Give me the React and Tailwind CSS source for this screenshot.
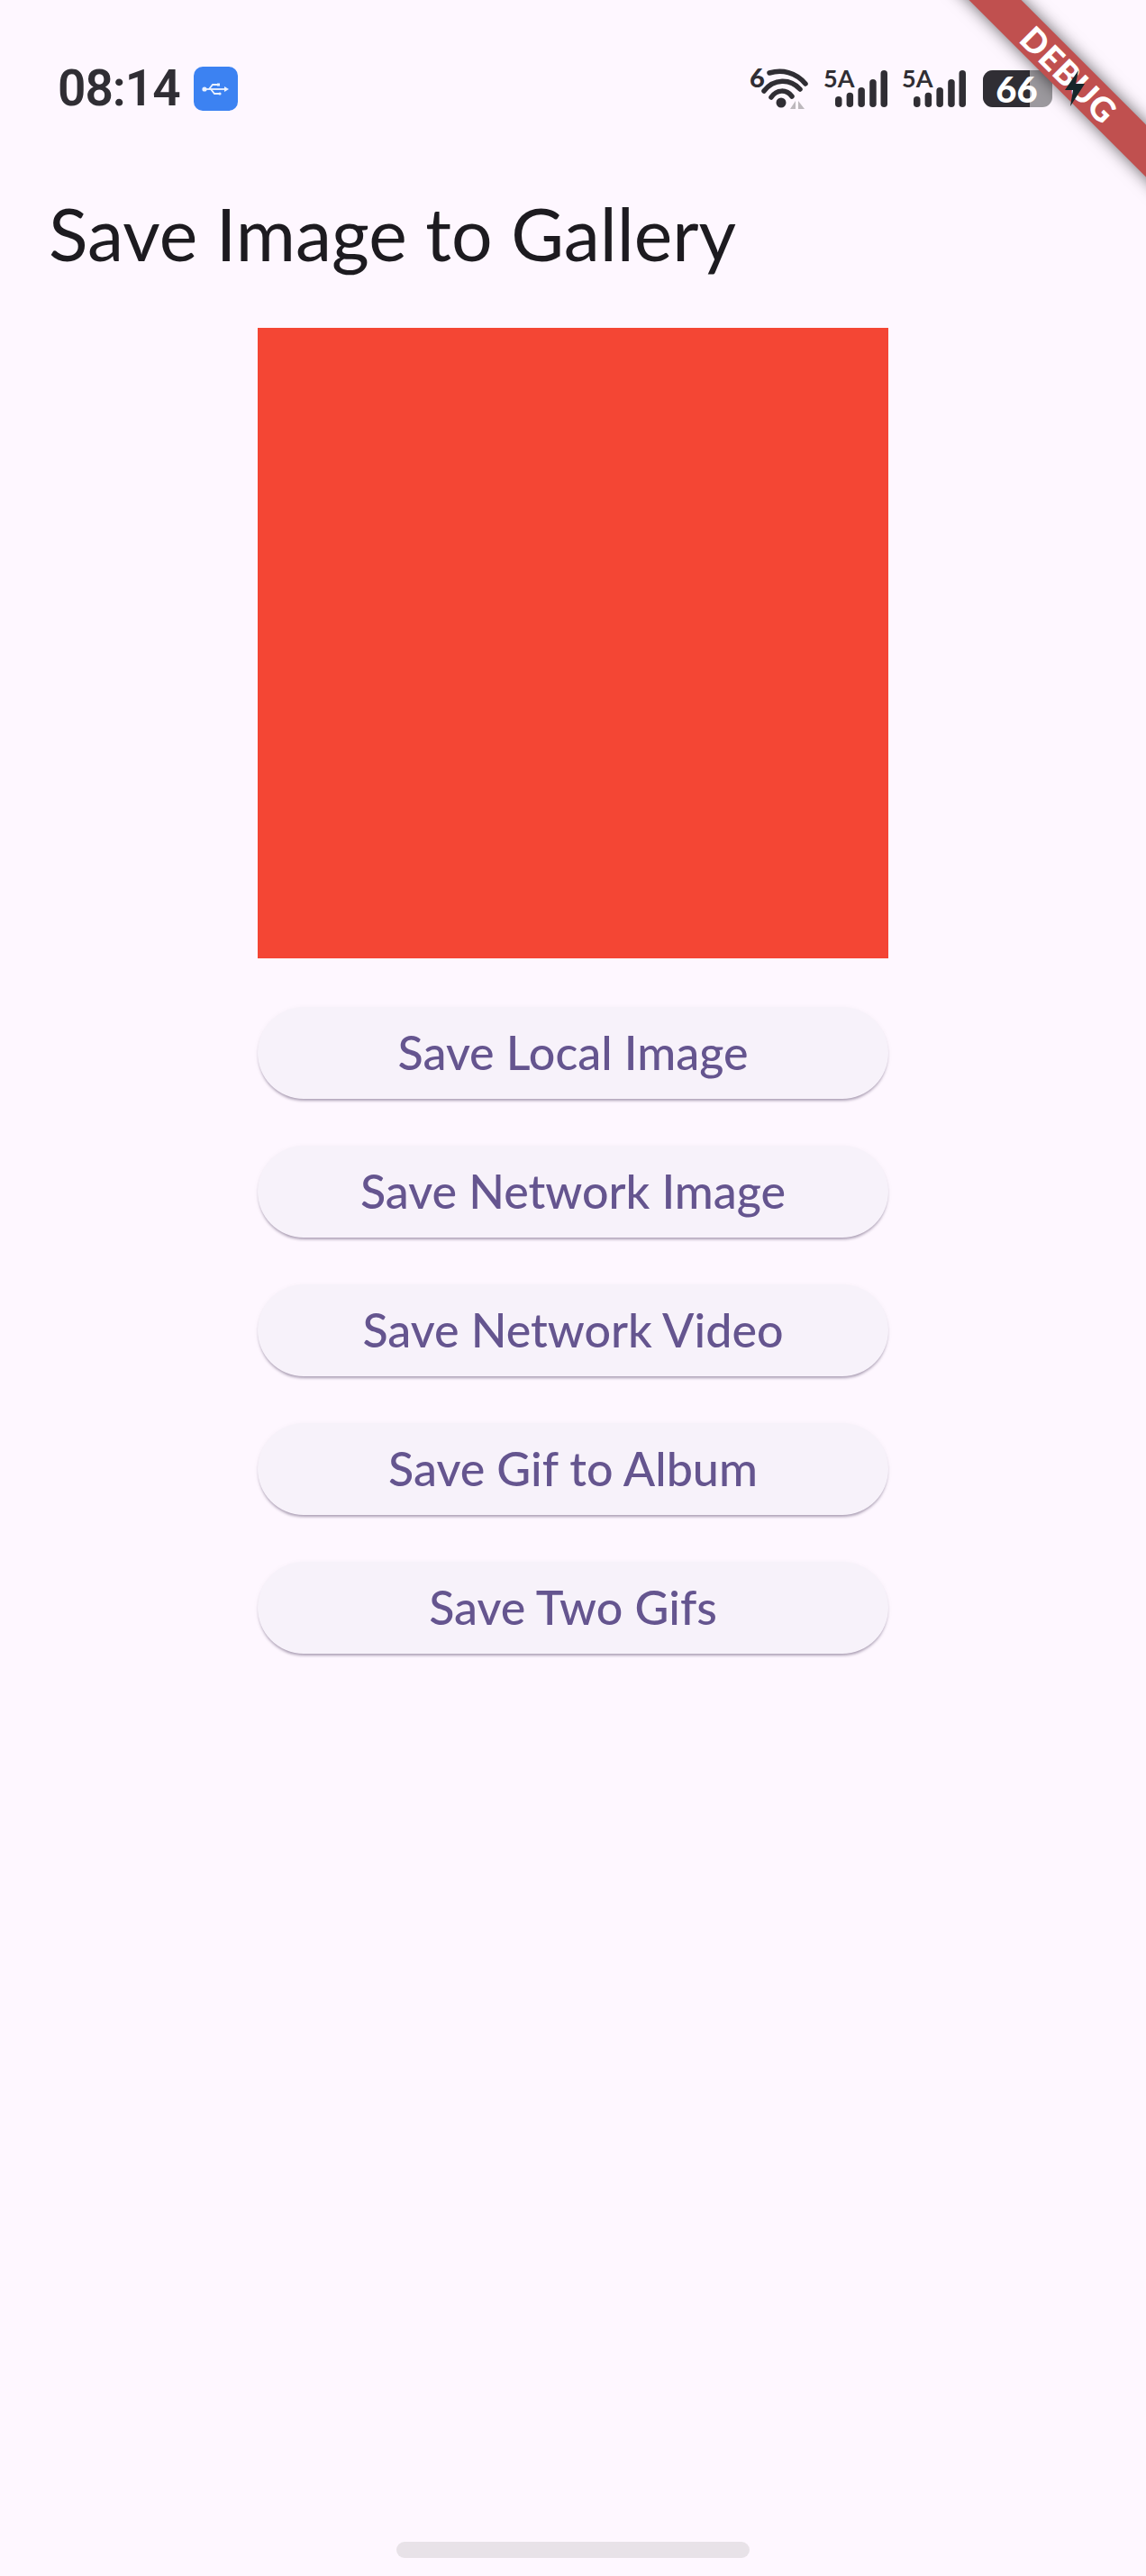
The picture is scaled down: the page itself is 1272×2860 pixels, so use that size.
import React from 'react';

const buttons = ['Save Local Image', 'Save Network Image', 'Save Network Video', 'Save Gif to Album', 'Save Two Gifs'];

// Cellular signal: network label plus five rising bars
const SignalIcon = () => (
    <svg className="overflow-visible" width="70" height="41" viewBox="0 0 70 41" fill="#302e34">
        <text x="-1" y="19" fontSize="27" fontWeight="700" fontFamily="Lato, sans-serif">5A</text>
        <rect x="12" y="29" width="7.5" height="12" rx="3.75" />
        <rect x="24.6" y="24.7" width="7.5" height="16.3" rx="3.75" />
        <rect x="37.4" y="19" width="7.5" height="22" rx="3.75" />
        <rect x="50.2" y="10" width="7.5" height="31" rx="3.75" />
        <rect x="62.5" y="0" width="7.5" height="41" rx="3.75" />
    </svg>
);

const WifiIcon = () => (
    <svg className="overflow-visible" width="65" height="46" viewBox="0 0 65 46" fill="none">
        <text x="-1" y="21" fontSize="29" fontWeight="900" fontFamily="Lato, sans-serif" fill="#302e34">6</text>
        <g stroke="#302e34" strokeWidth="5.5" strokeLinecap="round">
            <path d="M21 5C35 1 50 4 61 17" />
            <path d="M15 25C26 11 44 11 55 23" />
            <path d="M23 32C29 23 40 23 46 31" />
        </g>
        <circle cx="34" cy="38" r="5.5" fill="#302e34" />
        <path d="M50 36V45H44ZM53 36V45H60Z" fill="#bdb8bd" />
    </svg>
);

const UsbBadge = () => (
    <div className="w-[49px] h-[49px] rounded-[10px] bg-[#3c82f2] flex items-center justify-center">
        <svg width="30" height="16" viewBox="0 0 30 16" fill="none" stroke="#eaf2ff" strokeWidth="1.8">
            <circle cx="3" cy="8" r="2.6" fill="#eaf2ff" stroke="none" />
            <path d="M3 8H26" />
            <path d="M8 8L12 3H17" />
            <path d="M10 8L14 13H19" />
            <path d="M25 5L30 8L25 11Z" fill="#eaf2ff" stroke="none" />
            <rect x="17" y="1.5" width="3" height="3" fill="#eaf2ff" stroke="none" />
            <circle cx="20" cy="13" r="1.6" fill="#eaf2ff" stroke="none" />
        </svg>
    </div>
);

const Battery = () => (
    <div className="relative w-[77px] h-[41px] rounded-[11px] bg-[#9c999e] overflow-hidden">
        <div className="w-[52px] h-full bg-[#302e34]" />
        <span className="absolute inset-0 flex items-center justify-center text-[40px] leading-none font-black text-white pr-[2px]">66</span>
    </div>
);

export default function App() {
    return (
        <div className="relative w-[1272px] h-[2860px] overflow-hidden bg-[#fef7ff] flex flex-col font-['Lato',sans-serif]">
            {/* Status bar */}
            <div className="flex items-center justify-between pt-[74px] pl-[64px] pr-[104px] h-[123px] box-border">
                <div className="flex items-center gap-[15px]">
                    <span className="text-[55px] leading-none font-semibold text-[#302e34] font-['Roboto',sans-serif] tracking-[-1px]">08:14</span>
                    <UsbBadge />
                </div>
                <div className="flex items-center gap-[17px]">
                    <WifiIcon />
                    <SignalIcon />
                    <SignalIcon />
                    <div className="ml-[2px]"><Battery /></div>
                </div>
            </div>

            {/* App bar */}
            <h1 className="mt-[88px] pl-[54px] text-[80.5px] leading-[96px] font-normal text-[#1d1b20]">Save Image to Gallery</h1>

            {/* Body */}
            <div className="mt-[57px] flex flex-col items-center">
                <div className="w-[700px] h-[700px] bg-[#f44634]" />
                <div className="mt-[54px] flex flex-col gap-[52px]">
                    {buttons.map((label) => (
                        <button
                            key={label}
                            className="w-[700px] h-[102px] rounded-full bg-[#f7f2fa] pb-[3px] text-[52px] leading-none font-medium text-[#65558f] shadow-[0_3px_3px_-1px_rgba(60,40,80,0.4),0_1px_6px_rgba(0,0,0,0.04)]"
                        >
                            {label}
                        </button>
                    ))}
                </div>
            </div>

            {/* Home indicator */}
            <div className="mt-auto mb-[20px] mx-auto w-[392px] h-[18px] rounded-full bg-[#e8e2e8]" />

            {/* Debug banner */}
            <div className="absolute left-[987px] top-[62px] w-[400px] h-[41px] rotate-45 bg-[#c0504f] shadow-[0_0_18px_rgba(0,0,0,0.6)] flex items-center justify-center text-[37px] leading-none font-black text-white tracking-[1px]">
                DEBUG
            </div>

            {/* Charging bolt */}
            <svg className="absolute left-[1182px] top-[78px]" width="22" height="40" viewBox="0 0 22 40" fill="#16262a">
                <path d="M15 0L0 22H9L6 40L22 15H12Z" />
            </svg>
        </div>
    );
}
